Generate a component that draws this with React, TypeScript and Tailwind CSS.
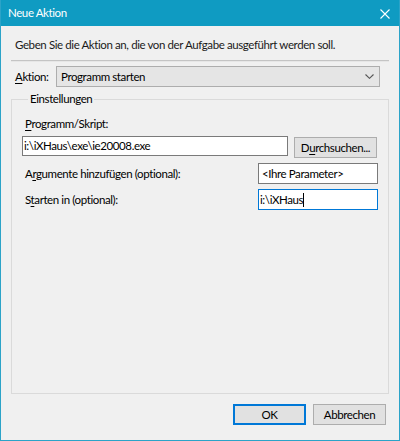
import React from "react";

// Windows 10 style "Neue Aktion" dialog
const font = { fontFamily: 'Lato, "Noto Sans", "Liberation Sans", sans-serif' };

const Key = ({ children }: { children: React.ReactNode }) => <span className="underline underline-offset-2">{children}</span>;

const App = () => {
    return (
        <div className="w-[400px] h-[441px] flex flex-col bg-[#f0f0f0] border-x border-b border-[#2ba3c8] text-[11.5px] tracking-[-0.4px] leading-[16px] text-black" style={font}>
            {/* Title bar */}
            <div className="h-[26px] shrink-0 flex items-center justify-between bg-[#0f9bc2] pl-[7px] pr-[9px] text-white">
                <span>Neue Aktion</span>
                <svg width="10" height="10" viewBox="0 0 10 10" className="mt-[1px]">
                    <path d="M0.5 0.5 L9.5 9.5 M9.5 0.5 L0.5 9.5" stroke="white" strokeWidth="1.1" fill="none" />
                </svg>
            </div>

            {/* Body */}
            <div className="flex-1 flex flex-col px-[10px]">
                <p className="mt-[11px] pl-[4px] text-[#1a1a1a] whitespace-nowrap">Geben Sie die Aktion an, die von der Aufgabe ausgeführt werden soll.</p>
                <div className="mt-[7px] h-[2px] border-t border-[#c4c4c4] border-b border-b-[#e6e6e6]" />

                {/* Aktion */}
                <div className="mt-[4px] flex items-center h-[21px]">
                    <span className="w-[45px] pl-[4px]"><Key>A</Key>ktion:</span>
                    <div className="w-[324px] h-[21px] flex items-center justify-between bg-[#e5e5e5] border border-[#adadad] pl-[4px] pr-[5px]">
                        <span>Programm starten</span>
                        <svg width="9" height="5" viewBox="0 0 9 5">
                            <path d="M0.5 0.5 L4.5 4.3 L8.5 0.5" stroke="#555" strokeWidth="1.1" fill="none" />
                        </svg>
                    </div>
                </div>

                {/* Einstellungen group */}
                <fieldset className="mt-[4px] flex-1 border border-[#dadada] pl-[10px] pr-[10px]">
                    <legend className="ml-[6px] px-[2px]">Einstellungen</legend>

                    <div className="mt-[9px] pl-[3px]"><Key>P</Key>rogramm/Skript:</div>
                    <div className="mt-[4px] flex items-start gap-[6px]">
                        <div className="w-[266px] h-[20px] bg-white border border-[#7a7a7a] pl-[1px] flex items-center">i:\iXHaus\exe\ie20008.exe</div>
                        <button className="mt-[1px] w-[83px] h-[21px] bg-[#e1e1e1] border border-[#adadad] flex items-center justify-center">D<Key>u</Key>rchsuchen...</button>
                    </div>

                    <div className="mt-[5px] flex items-center justify-between">
                        <span className="pl-[3px]">A<Key>r</Key>gumente hinzufügen (optional):</span>
                        <div className="w-[120px] h-[21px] bg-white border border-[#7a7a7a] pl-[3px] flex items-center">&lt;Ihre Parameter&gt;</div>
                    </div>

                    <div className="mt-[5px] flex items-center justify-between">
                        <span className="pl-[3px]">S<Key>t</Key>arten in (optional):</span>
                        <div className="w-[120px] h-[21px] bg-white border border-[#0078d7] pl-[1px] flex items-center">
                            i:\iXHaus<span className="w-px h-[14px] bg-black" />
                        </div>
                    </div>
                </fieldset>

                {/* Buttons */}
                <div className="mt-[10px] mb-[15px] flex justify-end gap-[7px] pr-[3px]">
                    <button className="w-[73px] h-[21px] bg-[#e1e1e1] border-2 border-[#0078d7] flex items-center justify-center">OK</button>
                    <button className="w-[73px] h-[21px] bg-[#e1e1e1] border border-[#adadad] flex items-center justify-center">Abbrechen</button>
                </div>
            </div>
        </div>
    );
};

export default App;
